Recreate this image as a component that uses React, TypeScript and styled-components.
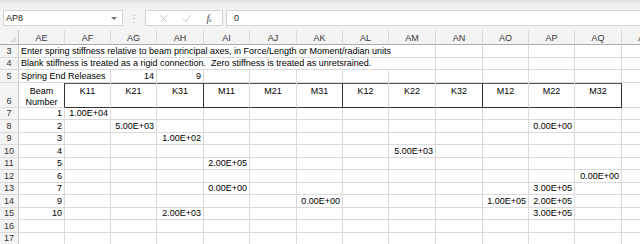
import React from "react";
import styled, { createGlobalStyle } from "styled-components";

const GlobalStyle = createGlobalStyle`
  body {
    margin: 0;
    background: #fff;
    font-family: "Liberation Sans", Arial, sans-serif;
    overflow: hidden;
  }
`;

const COLS = ["AE", "AF", "AG", "AH", "AI", "AJ", "AK", "AL", "AM", "AN", "AO", "AP", "AQ", "AR"];
const WIDTHS = [46, 46, 46, 47, 46, 47, 46, 46, 47, 47, 46, 46, 47, 46];

type CellDef = {
  t: string;
  span?: number;
  a?: "left" | "right" | "center";
};

type RowDef = {
  n: number;
  cells: Record<number, CellDef>;
};

// header row (6) is drawn separately because of the box borders
const ROWS: RowDef[] = [
  {
    n: 3,
    cells: {
      0: {
        t: "Enter spring stiffness relative to beam principal axes, in Force/Length or Moment/radian units",
        span: 9,
        a: "left",
      },
    },
  },
  {
    n: 4,
    cells: {
      0: {
        t: "Blank stiffness is treated as a rigid connection.  Zero stiffness is treated as unretsrained.",
        span: 9,
        a: "left",
      },
    },
  },
  {
    n: 5,
    cells: {
      0: { t: "Spring End Releases", span: 2, a: "left" },
      2: { t: "14" },
      3: { t: "9" },
    },
  },
];

const DATA: RowDef[] = [
  { n: 7, cells: { 0: { t: "1" }, 1: { t: "1.00E+04" } } },
  { n: 8, cells: { 0: { t: "2" }, 2: { t: "5.00E+03" }, 11: { t: "0.00E+00" } } },
  { n: 9, cells: { 0: { t: "3" }, 3: { t: "1.00E+02" } } },
  { n: 10, cells: { 0: { t: "4" }, 8: { t: "5.00E+03" } } },
  { n: 11, cells: { 0: { t: "5" }, 4: { t: "2.00E+05" } } },
  { n: 12, cells: { 0: { t: "6" }, 12: { t: "0.00E+00" } } },
  { n: 13, cells: { 0: { t: "7" }, 4: { t: "0.00E+00" }, 11: { t: "3.00E+05" } } },
  {
    n: 14,
    cells: { 0: { t: "9" }, 6: { t: "0.00E+00" }, 10: { t: "1.00E+05" }, 11: { t: "2.00E+05" } },
  },
  { n: 15, cells: { 0: { t: "10" }, 3: { t: "2.00E+03" }, 11: { t: "3.00E+05" } } },
  { n: 16, cells: {} },
  { n: 17, cells: {} },
];

const HEADS = ["K11", "K21", "K31", "M11", "M21", "M31", "K12", "K22", "K32", "M12", "M22", "M32"];

const Window = styled.div`
  width: 640px;
  height: 244px;
  overflow: hidden;
  background: #fff;
`;

const FormulaBar = styled.div`
  height: 30px;
  box-sizing: border-box;
  padding: 10px 0 4px 3px;
  display: flex;
  align-items: stretch;
  background: linear-gradient(#e2e2e2 0, #eeeeee 4px, #f3f3f3 9px);
`;

const NameBox = styled.div`
  width: 120px;
  box-sizing: border-box;
  background: #fff;
  border: 1px solid #d4d4d4;
  display: flex;
  align-items: center;
  justify-content: space-between;
  padding: 0 5px 0 2px;
  font-size: 9px;
  color: #222;
`;

const DropArrow = styled.span`
  width: 0;
  height: 0;
  border-left: 3px solid transparent;
  border-right: 3px solid transparent;
  border-top: 3px solid #777;
`;

const Grip = styled.div`
  width: 22px;
  display: flex;
  justify-content: center;
  align-items: center;
  color: #b8b8b8;
  font-size: 10px;
`;

const IconBox = styled.div`
  width: 78px;
  box-sizing: border-box;
  background: #fff;
  border: 1px solid #d4d4d4;
  display: flex;
  align-items: center;
  justify-content: space-around;
  padding: 0 4px 0 6px;
  margin-right: 3px;
`;

const FxIcon = styled.span`
  font-family: "Liberation Serif", serif;
  font-style: italic;
  font-size: 10px;
  color: #444;
  letter-spacing: -0.5px;
  & small {
    font-size: 6px;
  }
`;

const FormulaInput = styled.div`
  flex: 1;
  background: #fff;
  border: 1px solid #d4d4d4;
  border-right: none;
  display: flex;
  align-items: center;
  padding-left: 7px;
  font-size: 9px;
  color: #222;
`;

const Sheet = styled.div`
  display: grid;
  grid-template-columns: 19px ${WIDTHS.map((w) => `${w}px`).join(" ")};
  grid-template-rows: 15px repeat(3, 12.5px) 25px repeat(11, 12.5px);
  font-size: 9px;
  color: #000;
`;

const Corner = styled.div`
  background: #f3f3f3;
  border-right: 1px solid #c8c8c8;
  border-bottom: 1px solid #ababab;
  position: relative;
  &::after {
    content: "";
    position: absolute;
    right: 2px;
    bottom: 2px;
    border-left: 6px solid transparent;
    border-bottom: 6px solid #dcdcdc;
  }
`;

const ColHead = styled.div`
  background: #f3f3f3;
  border-right: 1px solid #d9d9d9;
  border-bottom: 1px solid #ababab;
  color: #333;
  display: flex;
  align-items: center;
  justify-content: center;
  white-space: nowrap;
  overflow: hidden;
  padding-top: 1px;
`;

const RowHead = styled.div`
  background: #f3f3f3;
  border-right: 1px solid #c8c8c8;
  border-bottom: 1px solid #dadada;
  color: #333;
  display: flex;
  align-items: flex-end;
  justify-content: center;
  line-height: 11px;
`;

const Cell = styled.div<{
  $span?: number;
  $align?: "left" | "right" | "center";
  $top?: boolean;
  $right?: string;
  $bottom?: string;
  $box?: boolean;
}>`
  grid-column: span ${(p) => p.$span || 1};
  box-sizing: border-box;
  border-right: 1px solid ${(p) => p.$right || "#dadada"};
  border-bottom: 1px solid ${(p) => p.$bottom || "#dadada"};
  box-shadow: ${(p) => (p.$box ? "inset 0 1px 0 #555" : "none")};
  display: flex;
  align-items: ${(p) => (p.$top ? "flex-start" : "flex-end")};
  justify-content: ${(p) =>
    p.$align === "left" ? "flex-start" : p.$align === "center" ? "center" : "flex-end"};
  text-align: ${(p) => p.$align || "right"};
  padding: ${(p) => (p.$top ? "3px 2px 0" : "0 2px 0 2px")};
  line-height: 11px;
  white-space: pre;
  overflow: visible;
`;

const Wrapped = styled.span`
  white-space: normal;
  line-height: 11px;
`;

const renderRow = (row: RowDef) => {
  const out: React.ReactNode[] = [<RowHead key={`h${row.n}`}>{row.n}</RowHead>];
  let c = 0;
  while (c < COLS.length) {
    const def = row.cells[c];
    const span = def?.span || 1;
    out.push(
      <Cell key={`${row.n}-${c}`} $span={span} $align={def?.a}>
        {def?.t}
      </Cell>
    );
    c += span;
  }
  return out;
};

const groupEnd = (i: number) => i % 3 === 2;

const App = () => {
  return (
    <Window>
      <GlobalStyle />
      <FormulaBar>
        <NameBox>
          <span>AP8</span>
          <DropArrow />
        </NameBox>
        <Grip>⋮</Grip>
        <IconBox>
          <svg width="9" height="9" viewBox="0 0 9 9">
            <path d="M1.5 1.5 L7.5 7.5 M7.5 1.5 L1.5 7.5" stroke="#c4c4c4" strokeWidth="1" />
          </svg>
          <svg width="10" height="9" viewBox="0 0 10 9">
            <path d="M1 4.8 L3.8 7.5 L9 1.2" stroke="#c4c4c4" strokeWidth="1" fill="none" />
          </svg>
          <FxIcon>
            f<small>x</small>
          </FxIcon>
        </IconBox>
        <FormulaInput>0</FormulaInput>
      </FormulaBar>

      <Sheet>
        <Corner />
        {COLS.map((c) => (
          <ColHead key={c}>{c}</ColHead>
        ))}

        {ROWS.map(renderRow)}

        <RowHead>6</RowHead>
        <Cell $align="center" $top $right="#333">
          <Wrapped>Beam Number</Wrapped>
        </Cell>
        {HEADS.map((h, i) => (
          <Cell
            key={h}
            $align="center"
            $top
            $box
            $bottom="#333"
            $right={groupEnd(i) ? "#333" : undefined}
          >
            {h}
          </Cell>
        ))}
        <Cell />

        {DATA.map(renderRow)}
      </Sheet>
    </Window>
  );
};

export default App;
